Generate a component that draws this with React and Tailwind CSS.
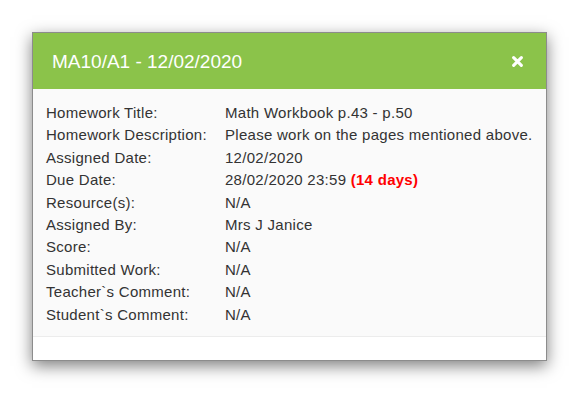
export default function App() {
  const rows = [
    ["Homework Title:", "Math Workbook p.43 - p.50"],
    ["Homework Description:", "Please work on the pages mentioned above."],
    ["Assigned Date:", "12/02/2020"],
    ["Due Date:", null],
    ["Resource(s):", "N/A"],
    ["Assigned By:", "Mrs J Janice"],
    ["Score:", "N/A"],
    ["Submitted Work:", "N/A"],
    ["Teacher`s Comment:", "N/A"],
    ["Student`s Comment:", "N/A"],
  ];
  return (
    <div className="w-[579px] h-[393px] bg-white overflow-hidden pt-[32px] pl-[32px]" style={{ fontFamily: '"Liberation Sans", Arial, sans-serif' }}>
      <div className="w-[515px] h-[329px] border border-[#8c8c8c] bg-white shadow-[0_5px_15px_rgba(0,0,0,0.5)] flex flex-col">
        <div className="h-[56px] bg-[#8bc34a] flex items-center justify-between pl-[19px] pr-[23px] shrink-0">
          <span className="text-white text-[19px] leading-none">MA10/A1 - 12/02/2020</span>
          <svg width="11" height="11" viewBox="0 0 10 10">
            <path d="M1.5 1.5 L8.5 8.5 M8.5 1.5 L1.5 8.5" stroke="white" strokeWidth="2.8" strokeLinecap="round" />
          </svg>
        </div>
        <div className="bg-[#fafafa] pl-[13px] pt-[13px] pb-[10px] border-b border-[#ececec] flex-1">
          {rows.map(([label, value]) => (
            <div key={label} className="flex text-[15px] leading-[22.4px] text-[#333] tracking-[0.28px]">
              <div className="w-[179px] shrink-0">{label}</div>
              <div>
                {value !== null ? (
                  value
                ) : (
                  <>
                    28/02/2020 23:59 <span className="font-bold text-[#ff0000]">(14 days)</span>
                  </>
                )}
              </div>
            </div>
          ))}
        </div>
        <div className="h-[23px] bg-white shrink-0"></div>
      </div>
    </div>
  );
}
